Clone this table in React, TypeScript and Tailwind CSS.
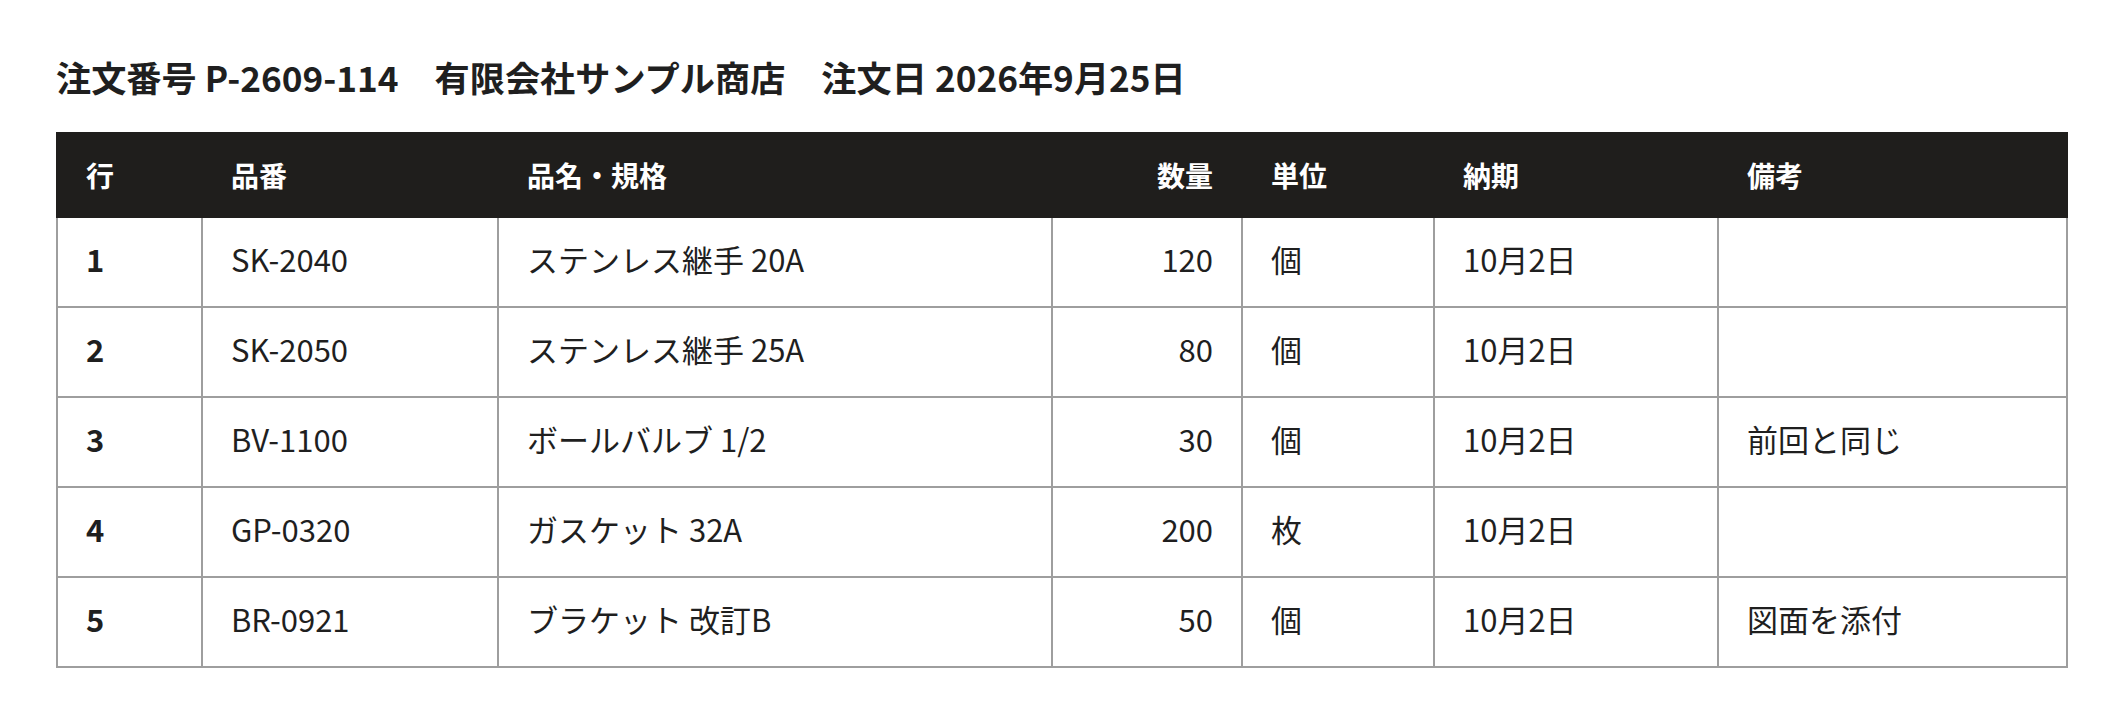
const rows = [
  { no: 1, code: "SK-2040", name: "ステンレス継手 20A", qty: 120, unit: "個", due: "10月2日", note: "" },
  { no: 2, code: "SK-2050", name: "ステンレス継手 25A", qty: 80, unit: "個", due: "10月2日", note: "" },
  { no: 3, code: "BV-1100", name: "ボールバルブ 1/2", qty: 30, unit: "個", due: "10月2日", note: "前回と同じ" },
  { no: 4, code: "GP-0320", name: "ガスケット 32A", qty: 200, unit: "枚", due: "10月2日", note: "" },
  { no: 5, code: "BR-0921", name: "ブラケット 改訂B", qty: 50, unit: "個", due: "10月2日", note: "図面を添付" },
];

const th = "h-[84px] border-2 border-[#1f1e1c] px-7 text-left font-bold";
const td = "h-[90px] border-2 border-[#9e9e9e] px-7 pb-[6px]";

export default function App() {
  return (
    <div
      className="min-h-screen bg-white pl-[56px] pt-[51px] text-[#1f1f1f]"
      style={{ fontFamily: '"Noto Sans CJK JP", "Noto Sans", sans-serif' }}
    >
      <h1 className="mb-[29px] flex h-[52px] items-center gap-[36px] text-[35.2px] font-bold leading-[52px]">
        <span>注文番号 P-2609-114</span>
        <span>有限会社サンプル商店</span>
        <span>注文日 2026年9月25日</span>
      </h1>

      <table className="w-[2010px] table-fixed border-collapse text-[31px]">
        <colgroup>
          <col className="w-[145px]" />
          <col className="w-[296px]" />
          <col className="w-[554px]" />
          <col className="w-[190px]" />
          <col className="w-[192px]" />
          <col className="w-[284px]" />
          <col className="w-[349px]" />
        </colgroup>
        <thead>
          <tr className="bg-[#1f1e1c] text-[28px] text-white">
            <th className={th}>行</th>
            <th className={th}>品番</th>
            <th className={th}>品名・規格</th>
            <th className={`${th} !text-right`}>数量</th>
            <th className={th}>単位</th>
            <th className={th}>納期</th>
            <th className={th}>備考</th>
          </tr>
        </thead>
        <tbody>
          {rows.map((r) => (
            <tr key={r.no}>
              <td className={`${td} font-bold`}>{r.no}</td>
              <td className={td}>{r.code}</td>
              <td className={td}>{r.name}</td>
              <td className={`${td} text-right`}>{r.qty}</td>
              <td className={td}>{r.unit}</td>
              <td className={td}>{r.due}</td>
              <td className={td}>{r.note}</td>
            </tr>
          ))}
        </tbody>
      </table>
    </div>
  );
}
